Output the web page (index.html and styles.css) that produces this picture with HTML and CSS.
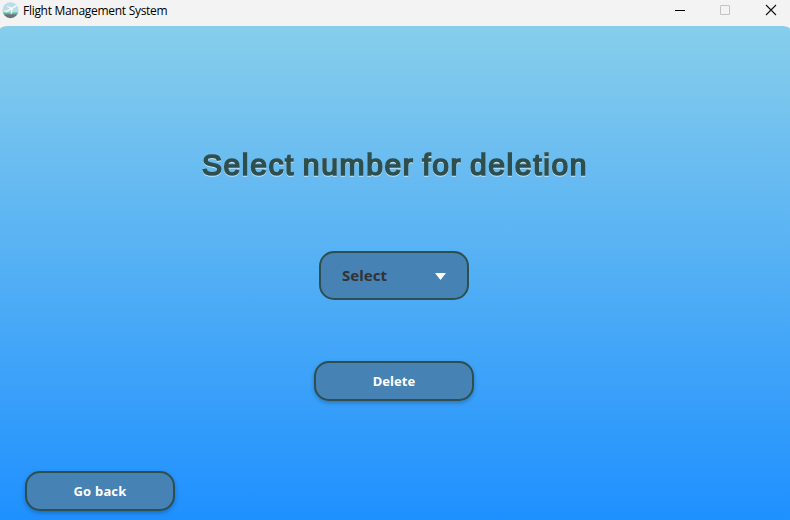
FILE: index.html
```html
<!DOCTYPE html>
<html lang="en">
<head>
<meta charset="utf-8">
<title>Flight Management System</title>
<link rel="stylesheet" href="styles.css">
</head>
<body>
<header class="titlebar">
  <svg class="app-icon" width="17" height="17" viewBox="0 0 17 17">
    <defs><clipPath id="disc"><circle cx="8.5" cy="8.200" r="8"/></clipPath></defs>
    <g clip-path="url(#disc)">
      <rect width="17" height="17" fill="#b5def1"/>
      <rect y="10.5" width="17" height="2" fill="#46c69b"/>
      <rect y="12.2" width="17" height="5" fill="#6c7376"/>
      <path d="M1.5 9.2 2.5 8l2 .4 3-1.9L4 4.2l1.2-.5 4.8 1.6 3.4-2.2q2-.8 2.2 0t-1.6 1.9l-2.8 1.7-1.3 5-1.1.5.1-4.3-4.2 2.3Z" fill="#fbfaf5" stroke="#c5ccc4" stroke-width=".35"/>
    </g>
  </svg>
  <span class="app-name">Flight Management System</span>
  <svg class="controls" width="102" height="20" viewBox="0 0 102 20" fill="none">
    <path d="M0 10.5h10" stroke="#000"/>
    <rect x="45.5" y="5.500" width="9" height="9" rx=".5" stroke="#c3c3c3"/>
    <path d="m91 5 10 10m0-10-10 10" stroke="#111" stroke-width="1.1"/>
  </svg>
</header>
<main class="scene">
  <h1 class="heading">Select number for deletion</h1>
  <button class="control select"><span>Select</span><svg width="12" height="8" viewBox="0 0 12 8"><path d="M0 1h11L5.500 8Z" fill="#fff"/></svg></button>
  <button class="control delete">Delete</button>
  <button class="control back">Go back</button>
</main>
</body>
</html>
```
FILE: styles.css
```css
* { box-sizing: border-box; }
body {
  margin: 0;
  height: 520px;
  display: flex;
  flex-direction: column;
  overflow: hidden;
  background: #f3f3f3;
  font-family: "Noto Sans", sans-serif;
}
.titlebar {
  height: 26px;
  flex: none;
  display: flex;
  align-items: flex-start;
  padding: 0 13px 0 2px;
}
.app-icon { margin-top: 2px; }
.app-name {
  margin: 1px 0 0 4px;
  font: 12px/20px "Open Sans", sans-serif;
  letter-spacing: -.29px;
  color: #000;
}
.controls { margin-left: auto; }
.scene {
  flex: 1;
  display: flex;
  flex-direction: column;
  align-items: center;
  padding: 119px 2px 0 0;
  border-radius: 8px 8px 0 0 / 3px 3px 0 0;
  background: linear-gradient(#87ceeb, #1e90ff);
}
.heading {
  margin: 0;
  height: 40px;
  padding-left: 2px;
  font: 400 30px/40px "Liberation Sans", sans-serif;
  letter-spacing: 1.64px;
  word-spacing: -2.2px;
  white-space: nowrap;
  color: #2f4f4f;
  -webkit-text-stroke: 1.7px #2f4f4f;
  filter: drop-shadow(0 1px 0 rgba(255, 255, 255, .6));
}
.control {
  border: 2px solid #2f4f4f;
  border-radius: 15px;
  padding: 0;
  background: #4682b4;
  color: #fff;
  font: 700 13px/20px "Noto Sans", sans-serif;
  box-shadow: 0 2px 4px rgba(0, 0, 0, .25);
}
.select {
  display: flex;
  align-items: center;
  justify-content: space-between;
  width: 150px;
  height: 49px;
  margin-top: 66px;
  padding: 0 20px 2px 21px;
  font: 700 15px/20px "Noto Sans", sans-serif;
  color: #333;
  box-shadow: none;
}
.select svg { margin-top: 3px; }
.delete { width: 160px; height: 40px; margin-top: 61px; }
.back {
  align-self: flex-start;
  width: 150px;
  height: 40px;
  margin: 70px 0 0 25px;
  letter-spacing: .2px;
}
```
